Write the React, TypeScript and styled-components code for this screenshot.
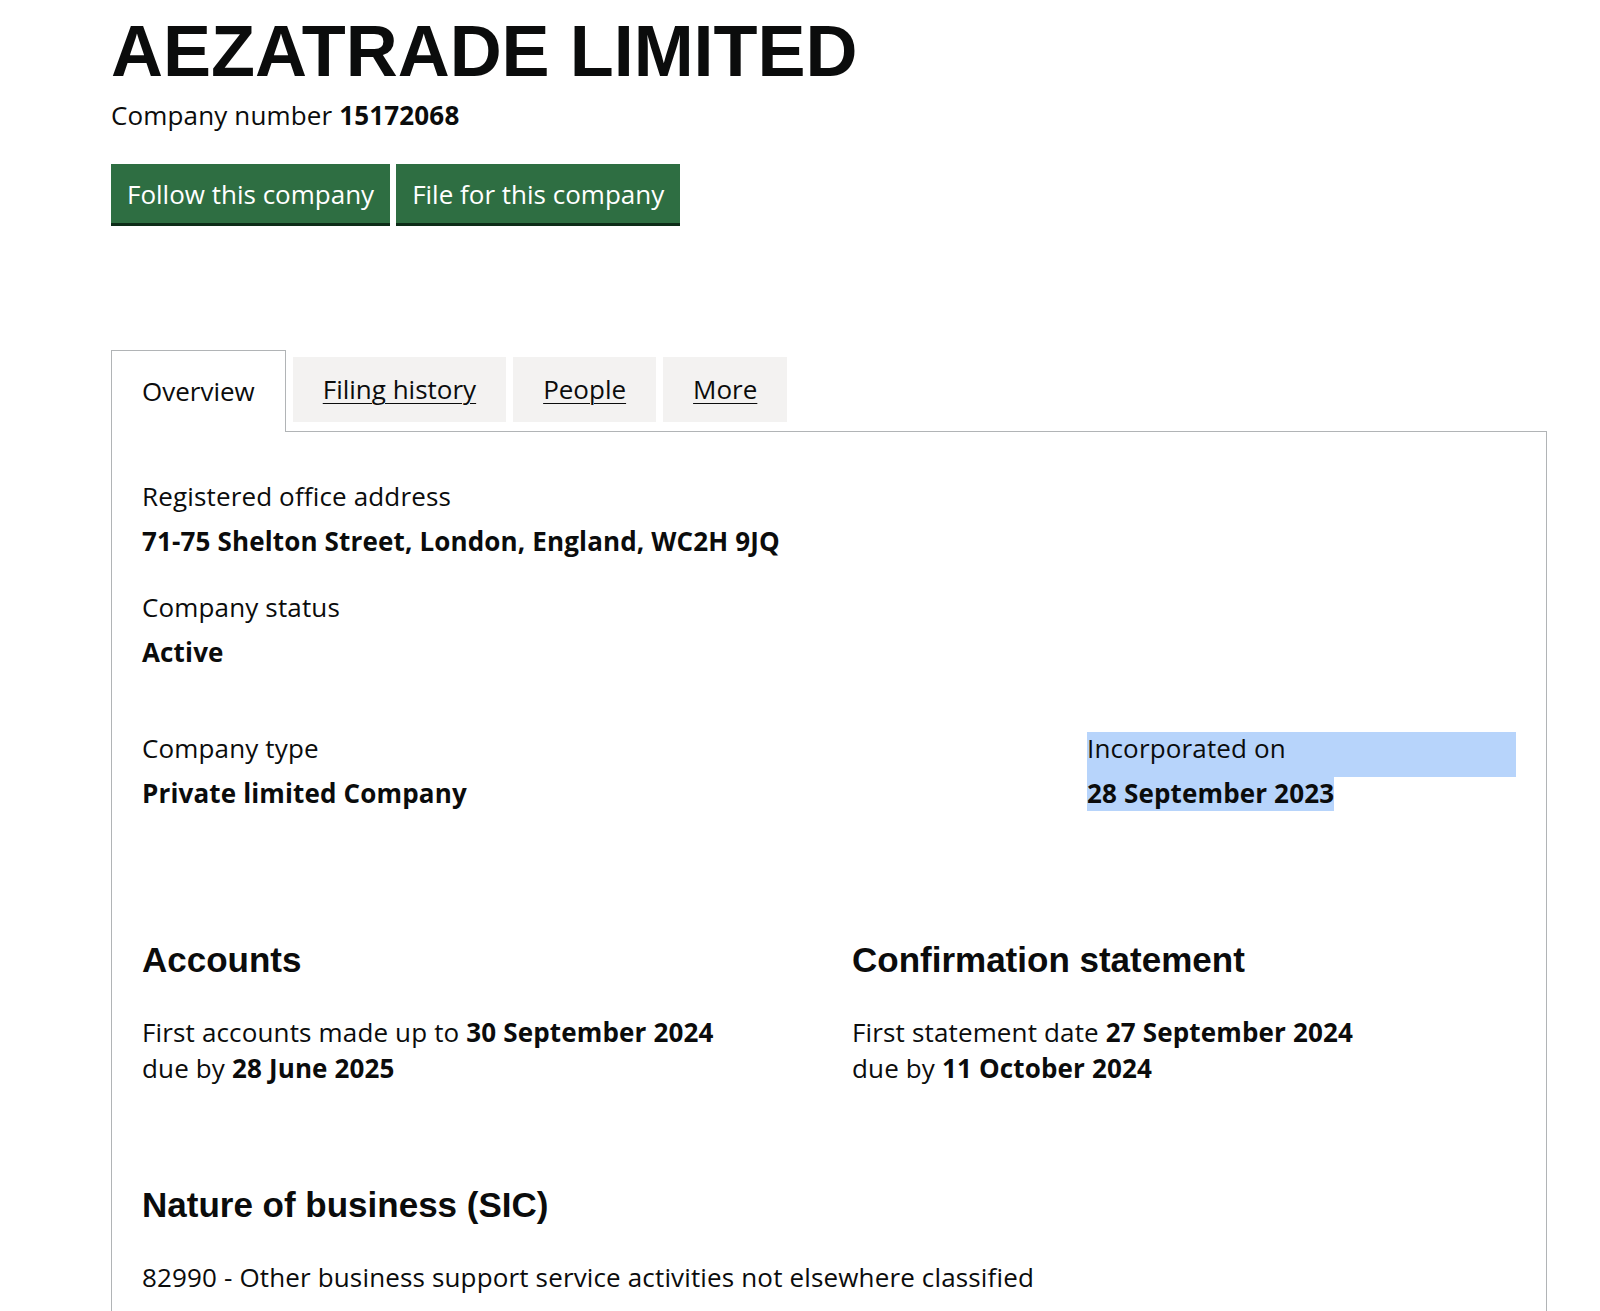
import React from "react";
import styled, { createGlobalStyle } from "styled-components";

const GlobalStyle = createGlobalStyle`
  html, body {
    margin: 0;
    padding: 0;
    background: #ffffff;
  }
  body {
    font-family: "Open Sans", "Noto Sans", Arial, sans-serif;
    font-size: 26px;
    letter-spacing: 0.15px;
    color: #0b0c0c;
  }
`;

const Page = styled.main`
  width: 1436px;
  padding: 15px 0 0 111px;
`;

const Title = styled.h1`
  margin: 0;
  font-family: "Liberation Sans", Arial, sans-serif;
  font-weight: 700;
  font-size: 72px;
  line-height: 72px;
  letter-spacing: normal;
  color: #0b0c0c;
`;

const CompanyNumber = styled.p`
  margin: 10px 0 0;
  font-size: 26px;
  line-height: 36px;
`;

const Strong = styled.strong`
  font-weight: 700;
`;

const ButtonRow = styled.div`
  display: flex;
  gap: 6px;
  margin-top: 31px;
`;

const Button = styled.a`
  display: inline-block;
  padding: 11.5px 16px;
  font-size: 26px;
  line-height: 36px;
  letter-spacing: 0;
  color: #ffffff;
  background: #2e6e42;
  box-shadow: 0 3px 0 #0d2c18;
  text-decoration: none;
  cursor: pointer;
`;

const TabList = styled.ul`
  display: flex;
  align-items: flex-end;
  list-style: none;
  margin: 127px 0 0;
  padding: 0;
`;

const Tab = styled.li<{ $active?: boolean }>`
  margin-right: 7px;
  font-size: 26px;
  line-height: 36px;
  letter-spacing: 0;
  ${(p) =>
    p.$active
      ? `
    position: relative;
    z-index: 1;
    padding: 22px 30px 23px;
    margin-bottom: -1px;
    background: #ffffff;
    border: 1px solid #b1b4b6;
    border-bottom: 0;
  `
      : `
    height: 65px;
    box-sizing: border-box;
    padding: 14px 30px 15px;
    margin-bottom: 9px;
    background: #f3f2f1;
  `}
`;

const TabLink = styled.a`
  color: #0b0c0c;
  text-decoration: underline;
  text-decoration-thickness: 1px;
  text-underline-offset: 4px;
`;

const Panel = styled.section`
  border: 1px solid #b1b4b6;
  padding: 48px 30px 90px;
`;

const Field = styled.dl<{ $gap?: number }>`
  margin: 0 0 ${(p) => p.$gap ?? 0}px;
`;

const Label = styled.dt<{ $selected?: boolean }>`
  margin: 0;
  padding-bottom: 12px;
  font-size: 26px;
  line-height: 33px;
  background: ${(p) => (p.$selected ? "#b7d4fb" : "transparent")};
`;

const Value = styled.dd`
  margin: 0;
  font-size: 26px;
  line-height: 33px;
  font-weight: 700;
`;

const Selected = styled.span`
  background: #b7d4fb;
`;

const Columns = styled.div<{ $first: number; $gap?: number }>`
  display: grid;
  grid-template-columns: ${(p) => p.$first}px 1fr;
  margin-bottom: ${(p) => p.$gap ?? 0}px;
`;

const Heading = styled.h2`
  margin: 0;
  font-family: "Liberation Sans", Arial, sans-serif;
  font-weight: 700;
  font-size: 35px;
  line-height: 40px;
  letter-spacing: normal;
  color: #0b0c0c;
`;

const Body = styled.p`
  margin: 34px 0 0;
  font-size: 26px;
  line-height: 36px;
`;

const Section = styled.div<{ $gap?: number }>`
  margin-bottom: ${(p) => p.$gap ?? 0}px;
`;

const tabs = [
  { label: "Overview", active: true },
  { label: "Filing history" },
  { label: "People" },
  { label: "More" },
];

export default function App() {
  return (
    <>
      <GlobalStyle />
      <Page>
        <Title>AEZATRADE LIMITED</Title>
        <CompanyNumber>
          Company number <Strong>15172068</Strong>
        </CompanyNumber>

        <ButtonRow>
          <Button>Follow this company</Button>
          <Button>File for this company</Button>
        </ButtonRow>

        <TabList>
          {tabs.map((t) => (
            <Tab key={t.label} $active={t.active}>
              {t.active ? t.label : <TabLink>{t.label}</TabLink>}
            </Tab>
          ))}
        </TabList>

        <Panel>
          <Field $gap={33}>
            <Label>Registered office address</Label>
            <Value>71-75 Shelton Street, London, England, WC2H 9JQ</Value>
          </Field>
          <Field $gap={63}>
            <Label>Company status</Label>
            <Value>Active</Value>
          </Field>

          <Columns $first={945} $gap={130}>
            <Field>
              <Label>Company type</Label>
              <Value>Private limited Company</Value>
            </Field>
            <Field>
              <Label $selected>Incorporated on</Label>
              <Value>
                <Selected>28 September 2023</Selected>
              </Value>
            </Field>
          </Columns>

          <Columns $first={710} $gap={99}>
            <div>
              <Heading>Accounts</Heading>
              <Body>
                First accounts made up to <Strong>30 September 2024</Strong>
                <br />
                due by <Strong>28 June 2025</Strong>
              </Body>
            </div>
            <div>
              <Heading>Confirmation statement</Heading>
              <Body>
                First statement date <Strong>27 September 2024</Strong>
                <br />
                due by <Strong>11 October 2024</Strong>
              </Body>
            </div>
          </Columns>

          <Section>
            <Heading>Nature of business (SIC)</Heading>
            <Body>82990 - Other business support service activities not elsewhere classified</Body>
          </Section>
        </Panel>
      </Page>
    </>
  );
}
